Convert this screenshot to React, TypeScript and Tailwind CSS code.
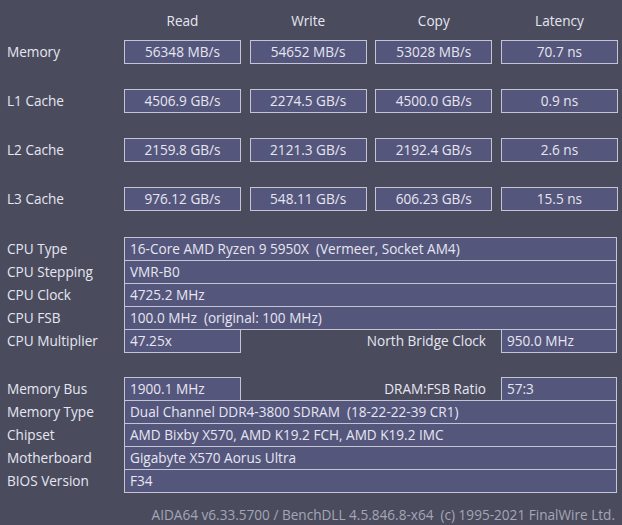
const bench = [
  { label: "Memory", values: ["56348 MB/s", "54652 MB/s", "53028 MB/s", "70.7 ns"] },
  { label: "L1 Cache", values: ["4506.9 GB/s", "2274.5 GB/s", "4500.0 GB/s", "0.9 ns"] },
  { label: "L2 Cache", values: ["2159.8 GB/s", "2121.3 GB/s", "2192.4 GB/s", "2.6 ns"] },
  { label: "L3 Cache", values: ["976.12 GB/s", "548.11 GB/s", "606.23 GB/s", "15.5 ns"] },
];

const box = "border border-[#c4c4d4] bg-[#55567b]";

function InfoRow({ label, value, first }: { label: string; value: string; first?: boolean }) {
  return (
    <div className={`flex h-[24px] ${first ? "" : "-mt-px"}`}>
      <div className="w-[124px] pl-[7px] flex items-center">{label}</div>
      <div className={`w-[493px] ${box} flex items-center pl-[5px] whitespace-pre`}>{value}</div>
    </div>
  );
}

function SplitRow({ label, value, midLabel, midValue }: { label: string; value: string; midLabel: string; midValue: string }) {
  return (
    <div className="flex h-[24px]">
      <div className="w-[124px] pl-[7px] flex items-center">{label}</div>
      <div className={`w-[117px] ${box} flex items-center pl-[5px]`}>{value}</div>
      <div className="w-[260px] flex items-center justify-end pr-[15px]">{midLabel}</div>
      <div className={`w-[116px] ${box} flex items-center pl-[5px]`}>{midValue}</div>
    </div>
  );
}

export default function App() {
  return (
    <div
      className="w-[622px] h-[525px] overflow-hidden bg-[#4a4c5d] text-[#e6e6f2] text-[13.6px] leading-none pt-[9px]"
      style={{ fontFamily: '"Open Sans", "Noto Sans", sans-serif' }}
    >
      {/* ── Benchmark table ── */}
      <div className="grid grid-cols-[108.33px_117px_117px_117px_117px] gap-x-[8.67px] pl-[7px]">
        <div className="h-[24px]" />
        {["Read", "Write", "Copy", "Latency"].map((h) => (
          <div key={h} className="h-[24px] flex items-center justify-center">{h}</div>
        ))}
      </div>
      <div className="flex flex-col gap-[25px] mt-[7px]">
        {bench.map((row) => (
          <div key={row.label} className="grid grid-cols-[108.33px_117px_117px_117px_117px] gap-x-[8.67px] pl-[7px]">
            <div className="h-[24px] flex items-center">{row.label}</div>
            {row.values.map((v, i) => (
              <div key={i} className={`h-[24px] ${box} flex items-center justify-center`}>{v}</div>
            ))}
          </div>
        ))}
      </div>

      {/* ── CPU info ── */}
      <div className="mt-[26px] flex flex-col">
        <InfoRow first label="CPU Type" value="16-Core AMD Ryzen 9 5950X  (Vermeer, Socket AM4)" />
        <InfoRow label="CPU Stepping" value="VMR-B0" />
        <InfoRow label="CPU Clock" value="4725.2 MHz" />
        <InfoRow label="CPU FSB" value="100.0 MHz  (original: 100 MHz)" />
        <div className="-mt-px">
          <SplitRow label="CPU Multiplier" value="47.25x" midLabel="North Bridge Clock" midValue="950.0 MHz" />
        </div>
      </div>

      {/* ── Memory info ── */}
      <div className="mt-[24px] flex flex-col">
        <SplitRow label="Memory Bus" value="1900.1 MHz" midLabel="DRAM:FSB Ratio" midValue="57:3" />
        <InfoRow label="Memory Type" value="Dual Channel DDR4-3800 SDRAM  (18-22-22-39 CR1)" />
        <InfoRow label="Chipset" value="AMD Bixby X570, AMD K19.2 FCH, AMD K19.2 IMC" />
        <InfoRow label="Motherboard" value="Gigabyte X570 Aorus Ultra" />
        <InfoRow label="BIOS Version" value="F34" />
      </div>

      <div className="mt-[15px] pr-[7px] text-right text-[#a4a6b6] whitespace-pre">
        AIDA64 v6.33.5700 / BenchDLL 4.5.846.8-x64  (c) 1995-2021 FinalWire Ltd.
      </div>
    </div>
  );
}
